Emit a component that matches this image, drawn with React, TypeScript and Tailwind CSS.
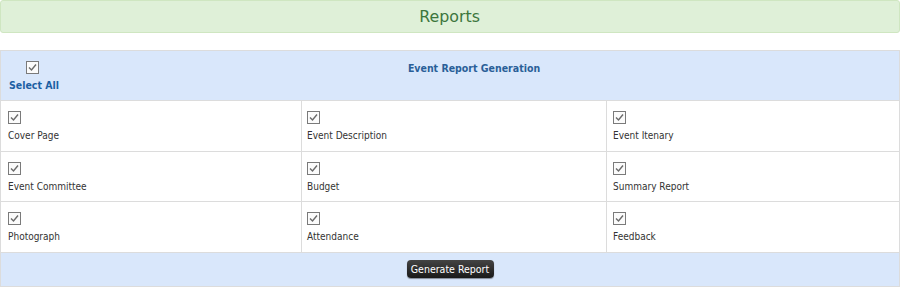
import React from "react";

function Check() {
  return (
    <svg width="13" height="13" viewBox="0 0 13 13" className="block">
      <rect x="0.5" y="0.5" width="12" height="12" fill="#fbfbfb" stroke="#7a7a7a" />
      <path d="M3 6.5 L5.5 9 L10 3.5" fill="none" stroke="#6a6a6a" strokeWidth="1.4" />
    </svg>
  );
}

const rows = [
  ["Cover Page", "Event Description", "Event Itenary"],
  ["Event Committee", "Budget", "Summary Report"],
  ["Photograph", "Attendance", "Feedback"],
];

export default function App() {
  return (
    <div className="w-[900px] h-[287px] bg-white text-[10px] text-[#333]" style={{ fontFamily: "'DejaVu Sans Condensed', 'Liberation Sans', sans-serif" }}>
      <div className="h-[33px] border border-[#cfe6c1] bg-[#dff0d8] rounded-[3px] flex items-center justify-center text-[#3c763d] text-[16px]">
        <span className="scale-x-[1.1]">Reports</span>
      </div>
      <div className="mt-[17px] border border-[#dcdcdc] mx-0">
        <div className="flex bg-[#d9e7fb] h-[50px] border-b border-[#dcdcdc]">
          <div className="w-[48px] shrink-0 pl-[8px] pt-[10px] flex flex-col whitespace-nowrap">
            <div className="pl-[17px]"><Check /></div>
            <div className="mt-[4px] font-bold text-[#1d5fa3] text-[10.5px]">Select All</div>
          </div>
          <div className="flex-1 text-center font-bold text-[#2a5f98] pt-[10px] text-[10.5px]">Event Report Generation</div>
        </div>
        {rows.map((r, i) => (
          <div key={i} className="flex h-[50.5px] border-b border-[#dcdcdc]">
            {r.map((c, j) => (
              <div
                key={j}
                className={
                  (j === 0 ? "w-[300px] pl-[7px] " : j === 1 ? "w-[305px] pl-[5px] border-l border-[#dcdcdc] " : "flex-1 pl-[6px] border-l border-[#dcdcdc] ") +
                  "pt-[10px]"
                }
              >
                <Check />
                <div className="mt-[5px] leading-[14px]">{c}</div>
              </div>
            ))}
          </div>
        ))}
        <div className="h-[33px] bg-[#d9e7fb] flex items-center justify-center">
          <button className="h-[18px] w-[87px] rounded-[4px] bg-gradient-to-b from-[#444] to-[#1a1a1a] text-white text-[10.5px] leading-none shadow-[0_1px_1px_rgba(0,0,0,0.4)]">
            Generate Report
          </button>
        </div>
      </div>
    </div>
  );
}
